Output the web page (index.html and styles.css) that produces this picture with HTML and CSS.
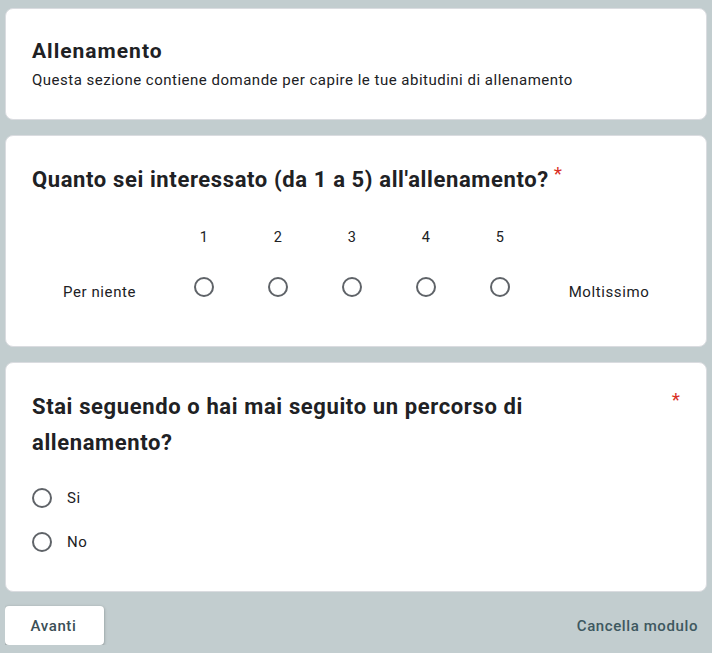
FILE: index.html
```html
<!DOCTYPE html>
<html lang="it">
<head>
<meta charset="utf-8">
<title>Allenamento</title>
<link rel="stylesheet" href="styles.css">
</head>
<body>
<main class="form">
  <section class="card header-card">
    <h1 class="section-title">Allenamento</h1>
    <p class="section-desc">Questa sezione contiene domande per capire le tue abitudini di allenamento</p>
  </section>

  <section class="card q-card scale-card">
    <h2 class="q-title">Quanto sei interessato (da 1 a 5) all'allenamento?<span class="req">*</span></h2>
    <div class="scale">
      <span class="scale-num"></span>
      <span class="scale-num">1</span>
      <span class="scale-num">2</span>
      <span class="scale-num">3</span>
      <span class="scale-num">4</span>
      <span class="scale-num">5</span>
      <span class="scale-num"></span>
      <span class="scale-label">Per niente</span>
      <span class="scale-cell"><span class="radio"></span></span>
      <span class="scale-cell"><span class="radio"></span></span>
      <span class="scale-cell"><span class="radio"></span></span>
      <span class="scale-cell"><span class="radio"></span></span>
      <span class="scale-cell"><span class="radio"></span></span>
      <span class="scale-label">Moltissimo</span>
    </div>
  </section>

  <section class="card q-card choice-card">
    <div class="q-head">
      <h2 class="q-title wrap">Stai seguendo o hai mai seguito un percorso di allenamento?</h2>
      <span class="req req-side">*</span>
    </div>
    <div class="options">
      <label class="option"><span class="radio"></span><span class="opt-text">Si</span></label>
      <label class="option"><span class="radio"></span><span class="opt-text">No</span></label>
    </div>
  </section>

  <div class="actions">
    <button class="btn-next" type="button">Avanti</button>
    <button class="btn-clear" type="button">Cancella modulo</button>
  </div>
</main>
</body>
</html>
```

FILE: styles.css
```css
* { box-sizing: border-box; }

html, body {
  background: #c2cdcf;
}

body {
  margin: 8px 5px 0 5px;
  font-family: Roboto, "Liberation Sans", Arial, sans-serif;
  color: #202124;
}

.form {
  display: flex;
  flex-direction: column;
}

.card {
  background: #ffffff;
  border: 1px solid #dadce0;
  border-radius: 8px;
  padding: 0 26px;
}

.header-card {
  height: 112px;
  padding-top: 28px;
}

.section-title {
  margin: 0;
  font-size: 21px;
  font-weight: 700;
  line-height: 28px;
  letter-spacing: 1px;
  color: #202124;
}

.section-desc {
  margin: 5px 0 0 0;
  font-size: 15px;
  line-height: 20px;
  letter-spacing: 0.5px;
  color: #202124;
}

.q-card {
  margin-top: 15px;
}

.scale-card {
  height: 212px;
  padding-top: 28px;
}

.q-title {
  margin: 0;
  font-size: 22px;
  font-weight: 700;
  line-height: 32px;
  letter-spacing: 0.62px;
  color: #202124;
}

.req {
  color: #d93025;
  font-weight: 400;
  font-size: 19px;
  margin-left: 5px;
  vertical-align: top;
  line-height: 20px;
  letter-spacing: 0;
}

.scale {
  display: grid;
  grid-template-columns: 135px repeat(5, 74px) 144px;
  grid-template-rows: 24px 40px;
  row-gap: 17px;
  margin-top: 30px;
}

.scale-num {
  text-align: center;
  font-size: 14.5px;
  line-height: 24px;
  letter-spacing: 0.3px;
  color: #202124;
}

.scale-label {
  text-align: center;
  font-size: 15px;
  line-height: 20px;
  letter-spacing: 0.6px;
  padding-top: 15px;
  color: #202124;
}

.scale-cell {
  display: flex;
  justify-content: center;
  align-items: center;
}

.radio {
  display: inline-block;
  width: 20px;
  height: 20px;
  border: 2px solid #5f6368;
  border-radius: 50%;
  flex: none;
}

.choice-card {
  height: 230px;
  padding-top: 26px;
}

.q-head {
  display: flex;
  justify-content: space-between;
  align-items: flex-start;
}

.q-title.wrap {
  width: 590px;
  line-height: 36px;
}

.req-side {
  margin: 1px 0 0 0;
}

.options {
  display: flex;
  flex-direction: column;
  gap: 24px;
  margin-top: 27px;
}

.option {
  display: flex;
  align-items: center;
  gap: 15px;
  padding-left: 0;
  height: 20px;
}

.opt-text {
  font-size: 15px;
  letter-spacing: 0.5px;
  color: #202124;
}

.actions {
  display: flex;
  justify-content: space-between;
  align-items: center;
  margin-top: 14px;
}

.btn-next {
  width: 99px;
  height: 39px;
  background: #ffffff;
  border: none;
  border-radius: 4px;
  box-shadow: 0 1px 2px rgba(60, 64, 67, 0.3), 0 1px 3px 1px rgba(60, 64, 67, 0.15);
  font-family: Roboto, "Liberation Sans", Arial, sans-serif;
  font-size: 15px;
  font-weight: 500;
  letter-spacing: 0.6px;
  color: #3c4f57;
  padding: 0 2px 0 0;
}

.btn-clear {
  background: none;
  border: none;
  font-family: Roboto, "Liberation Sans", Arial, sans-serif;
  font-size: 15px;
  font-weight: 500;
  letter-spacing: 0.6px;
  color: #3e5860;
  padding: 0 9px 0 0;
}
```
